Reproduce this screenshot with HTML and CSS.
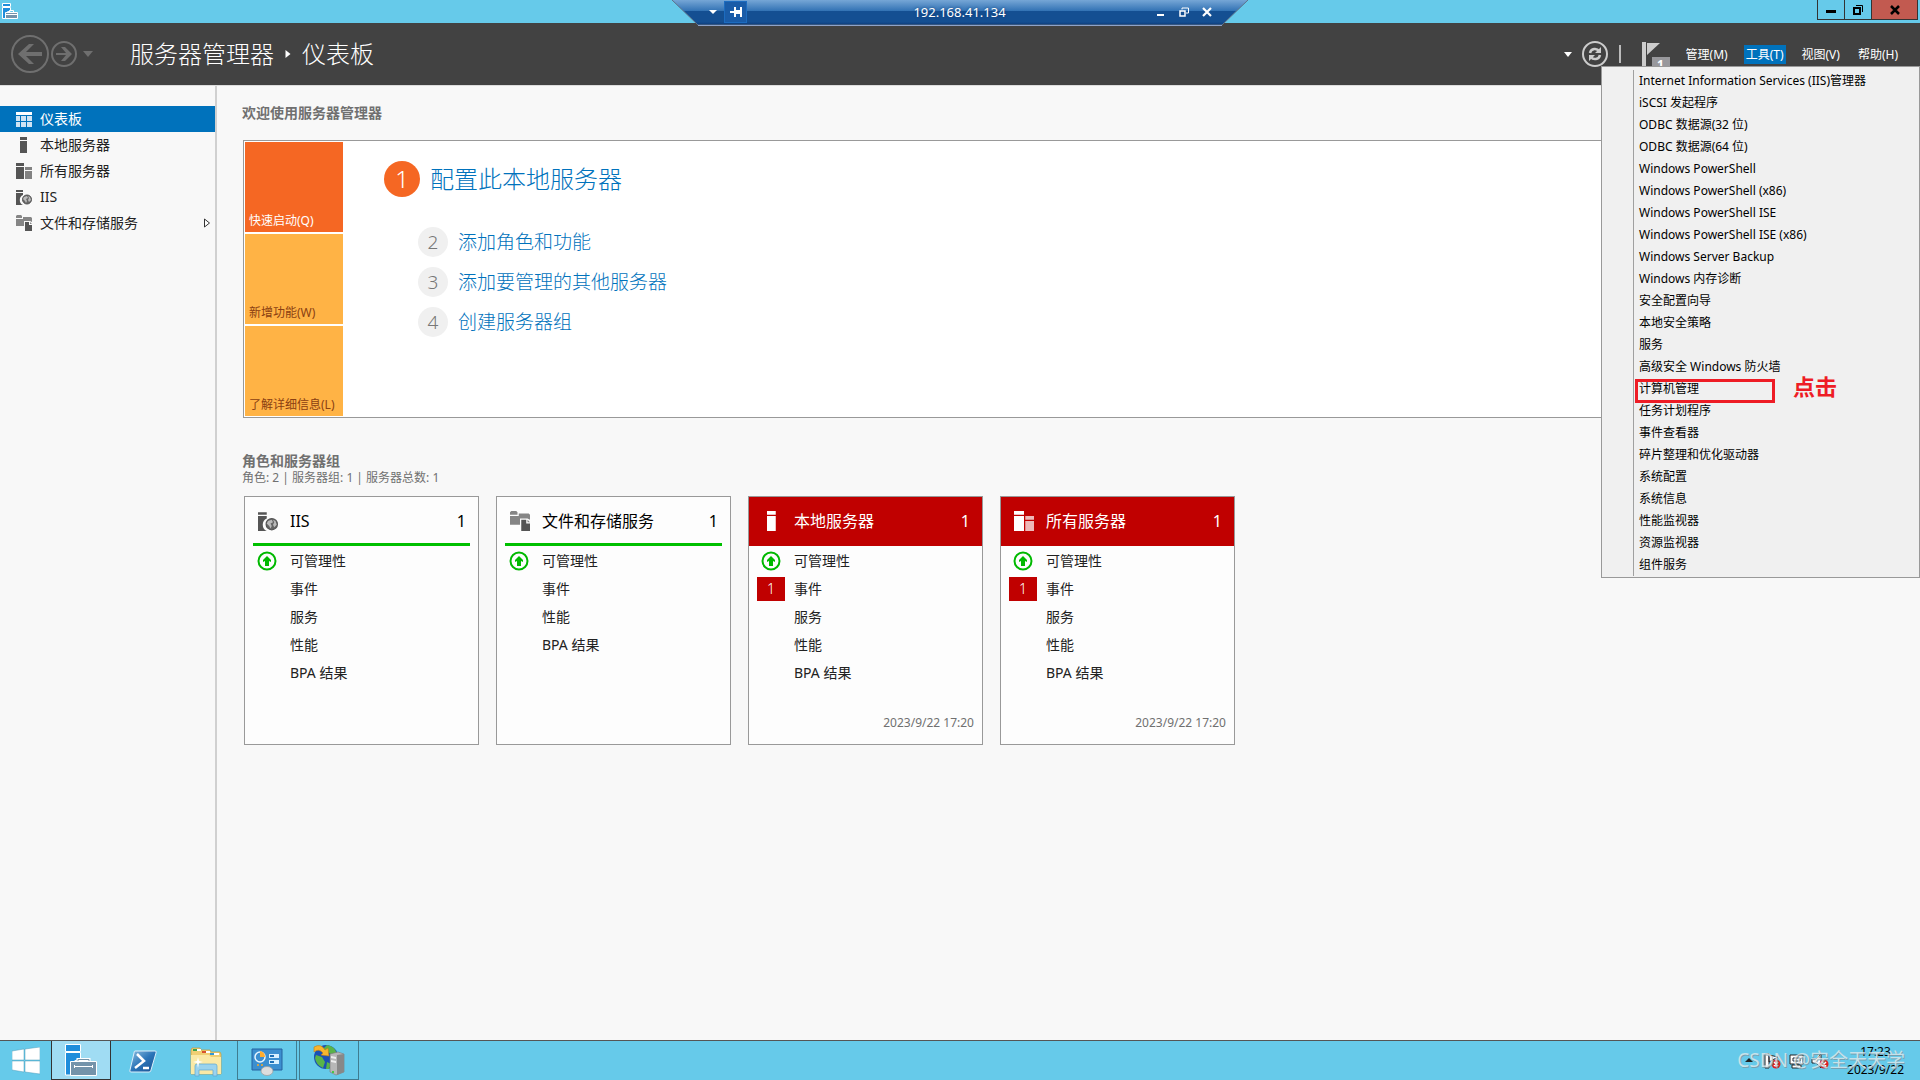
FILE: index.html
```html
<!DOCTYPE html>
<html lang="zh-CN">
<head>
<meta charset="utf-8">
<title>服务器管理器</title>
<link rel="stylesheet" href="styles.css">
</head>
<body>
<svg class="defs" aria-hidden="true">
  <symbol id="i-server" viewBox="0 0 16 16"><path d="M4 0h7v3H4zM4 4h7v12H4z"/></symbol>
  <symbol id="i-servers" viewBox="0 0 16 16"><path d="M0 0h8v3H0zM0 4h8v12H0z"/><path opacity=".72" d="M9 4h7v3H9zM9 8h7v8H9z"/></symbol>
  <symbol id="i-iis" viewBox="0 0 16 16"><path d="M0 1h7v2H0zM0 4h7v2a5.500 5.500 0 0 0 0 10H0z"/><circle cx="11" cy="10.500" r="4.500" fill="#666" stroke="#555" stroke-width="1"/><path fill="#bbb" d="M8 8l3-1 1 2-2 1 1 2-1 2-1-2-2-2zM12 7l2 1 1 3-2 2-1-2 1-2z"/></symbol>
  <symbol id="i-files" viewBox="0 0 16 16"><path fill="#858585" d="M0 1l1-1h4l1 1v2H0zM7 2h8l1 1v4l-2-1H8v5H0V4h7z"/><path d="M9 7h4v3h3v6H9z"/><path fill="#858585" d="M14 7l2 2h-2z"/></symbol>
  <symbol id="i-up" viewBox="0 0 20 20"><circle cx="10" cy="10" r="8.500" fill="none" stroke="#00b900" stroke-width="2"/><path fill="#00b900" d="M10 5l4 4v2l-2-1v5H8v-5l-2 1V9z"/></symbol>
</svg>

<header class="titlebar">
  <svg class="app-icon" viewBox="0 0 16 16"><path fill="#1f8ddb" stroke="#fff" d="M.5.500h8v3h-8zM.5 4.500h8V8L5 9v6.500H.5z"/><path fill="none" stroke="#fff" d="M7.500 9V7.500h4V9"/><path fill="#7493aa" stroke="#fff" d="M3.500 9.500h12v6h-12z"/><path stroke="#fff" d="M4 11.500h11"/></svg>
  <div class="window-buttons">
    <button aria-label="最小化"><svg viewBox="0 0 10 10"><path d="M0 5h10v3H0z"/></svg></button>
    <button aria-label="还原"><svg viewBox="0 0 10 10"><path fill="none" stroke="#000" stroke-width="2" d="M1 3h6v6H1z"/><path fill="none" stroke="#000" d="M3 .5h6.500V7"/></svg></button>
    <button class="close" aria-label="关闭"><svg viewBox="0 0 10 10"><path fill="none" stroke="#000" stroke-width="2.500" d="M1 1l8 8M9 1L1 9"/></svg></button>
  </div>
</header>

<div class="remote-bar">
  <svg class="remote-shape" viewBox="0 0 578 26" preserveAspectRatio="none">
    <defs><linearGradient id="rg" x2="0" y2="1"><stop offset="0" stop-color="#7cabd9"/><stop offset=".46" stop-color="#3272b4"/><stop offset=".47" stop-color="#144f92"/><stop offset=".88" stop-color="#144f92"/><stop offset="1" stop-color="#0c3a78"/></linearGradient></defs>
    <path fill="url(#rg)" stroke="#5f7087" d="M0-1L27 25h524L578-1z"/><path stroke="#8ea3c9" d="M27 25.500h524"/>
  </svg>
  <div class="remote-content">
    <button aria-label="连接菜单"><svg viewBox="0 0 10 10"><path fill="#fff" d="M1 3h8L5 7z"/></svg></button>
    <button class="pin" aria-label="固定"><svg viewBox="0 0 12 12"><path fill="#fff" d="M0 5h4V1h2v3h4V1h2v10h-2V8H6v3H4V7H0z"/></svg></button>
    <span class="remote-address">192.168.41.134</span>
    <button aria-label="最小化连接"><svg viewBox="0 0 10 10"><path fill="#fff" d="M1 7h7v2H1z"/></svg></button>
    <button aria-label="还原连接"><svg viewBox="0 0 10 10"><path fill="none" stroke="#fff" d="M3 2.500V1h6.500v5H7"/><path fill="none" stroke="#fff" stroke-width="1.500" d="M1 4h5v5H1z"/></svg></button>
    <button aria-label="关闭连接"><svg viewBox="0 0 10 10"><path fill="none" stroke="#fff" stroke-width="2.200" d="M1 1l8 8M9 1L1 9"/></svg></button>
  </div>
</div>

<div class="toolbar">
  <div class="history">
    <button aria-label="后退"><svg class="back" viewBox="0 0 38 38"><circle cx="19" cy="19" r="18" fill="none" stroke="#6f6f6f" stroke-width="2"/><path fill="#6f6f6f" d="M7 19L18 9h5l-8 8h16v4H15l8 8h-5z"/></svg></button>
    <button aria-label="前进"><svg class="forward" viewBox="0 0 26 26"><circle cx="13" cy="13" r="12" fill="none" stroke="#6f6f6f" stroke-width="2"/><path fill="#6f6f6f" d="M21 13l-7-7h-4l5 6H5v2h10l-5 6h4z"/></svg></button>
    <button aria-label="历史记录"><svg class="caret" viewBox="0 0 10 6"><path fill="#6f6f6f" d="M0 0h10L5 6z"/></svg></button>
  </div>
  <h1 class="crumbs"><span>服务器管理器</span><svg viewBox="0 0 5 8"><path fill="#fff" d="M0 0l5 4-5 4z"/></svg><span>仪表板</span></h1>
  <div class="tools">
    <button aria-label="更多"><svg class="caret-small" viewBox="0 0 8 5"><path fill="#fff" d="M0 0h8L4 5z"/></svg></button>
    <button aria-label="刷新"><svg class="refresh" viewBox="0 0 26 26"><circle cx="13" cy="13" r="12" fill="none" stroke="#ccc" stroke-width="2"/><path fill="none" stroke="#ccc" stroke-width="2.500" d="M8 12c1-5 7-5 9-2M18 14c-1 5-7 5-9 2"/><path fill="#ccc" d="M19 6v6h-6zM7 20v-6h6z"/></svg></button>
    <span class="separator"></span>
    <button class="flag" aria-label="通知"><svg viewBox="0 0 18 24"><path fill="#ccc" d="M0 0h4v24H0zM5 1h13L5 13z"/></svg><span class="flag-count">1</span></button>
    <nav class="menubar">
      <button>管理(M)</button><button class="open">工具(T)</button><button>视图(V)</button><button>帮助(H)</button>
    </nav>
  </div>
  <ul class="menu">
    <li><a href="#">Internet Information Services (IIS)管理器</a></li>
    <li><a href="#">iSCSI 发起程序</a></li>
    <li><a href="#">ODBC 数据源(32 位)</a></li>
    <li><a href="#">ODBC 数据源(64 位)</a></li>
    <li><a href="#">Windows PowerShell</a></li>
    <li><a href="#">Windows PowerShell (x86)</a></li>
    <li><a href="#">Windows PowerShell ISE</a></li>
    <li><a href="#">Windows PowerShell ISE (x86)</a></li>
    <li><a href="#">Windows Server Backup</a></li>
    <li><a href="#">Windows 内存诊断</a></li>
    <li><a href="#">安全配置向导</a></li>
    <li><a href="#">本地安全策略</a></li>
    <li><a href="#">服务</a></li>
    <li><a href="#">高级安全 Windows 防火墙</a></li>
    <li class="marked"><a href="#">计算机管理</a><span class="mark-box"></span><strong class="mark-text">点击</strong></li>
    <li><a href="#">任务计划程序</a></li>
    <li><a href="#">事件查看器</a></li>
    <li><a href="#">碎片整理和优化驱动器</a></li>
    <li><a href="#">系统配置</a></li>
    <li><a href="#">系统信息</a></li>
    <li><a href="#">性能监视器</a></li>
    <li><a href="#">资源监视器</a></li>
    <li><a href="#">组件服务</a></li>
  </ul>
</div>

<div class="workspace">
  <nav class="sidebar">
    <a class="selected" href="#"><svg viewBox="0 0 16 16"><path fill="#fff" d="M0 1h16v3H0z"/><path fill="#cfe4f4" d="M0 5h4v5H0zM5 5h5v5H5zM11 5h5v5h-5zM0 11h4v5H0zM5 11h5v5H5zM11 11h5v5h-5z"/></svg>仪表板</a>
    <a href="#"><svg><use href="#i-server"/></svg>本地服务器</a>
    <a href="#"><svg><use href="#i-servers"/></svg>所有服务器</a>
    <a href="#"><svg><use href="#i-iis"/></svg>IIS</a>
    <a href="#"><svg><use href="#i-files"/></svg>文件和存储服务<svg class="expand" viewBox="0 0 6 10"><path fill="#fff" stroke="#333" d="M.5 1l5 4-5 4z"/></svg></a>
  </nav>

  <main class="content">
    <h2>欢迎使用服务器管理器</h2>
    <section class="welcome">
      <div class="tiles">
        <button class="tile active">快速启动(Q)</button>
        <button class="tile">新增功能(W)</button>
        <button class="tile">了解详细信息(L)</button>
      </div>
      <ol class="steps">
        <li class="primary"><span class="number">1</span><a href="#">配置此本地服务器</a></li>
        <li><span class="number">2</span><a href="#">添加角色和功能</a></li>
        <li><span class="number">3</span><a href="#">添加要管理的其他服务器</a></li>
        <li><span class="number">4</span><a href="#">创建服务器组</a></li>
      </ol>
    </section>

    <h2 class="groups-title">角色和服务器组</h2>
    <p class="summary">角色: 2 | 服务器组: 1 | 服务器总数: 1</p>
    <div class="cards">
      <article class="card">
        <h3><svg><use href="#i-iis"/></svg>IIS<span class="count">1</span></h3>
        <ul>
          <li><span class="status"><svg><use href="#i-up"/></svg></span>可管理性</li>
          <li><span class="status"></span>事件</li><li><span class="status"></span>服务</li><li><span class="status"></span>性能</li><li><span class="status"></span>BPA 结果</li>
        </ul>
      </article>
      <article class="card">
        <h3><svg><use href="#i-files"/></svg>文件和存储服务<span class="count">1</span></h3>
        <ul>
          <li><span class="status"><svg><use href="#i-up"/></svg></span>可管理性</li>
          <li><span class="status"></span>事件</li><li><span class="status"></span>性能</li><li><span class="status"></span>BPA 结果</li>
        </ul>
      </article>
      <article class="card alert">
        <h3><svg><use href="#i-server"/></svg>本地服务器<span class="count">1</span></h3>
        <ul>
          <li><span class="status"><svg><use href="#i-up"/></svg></span>可管理性</li>
          <li><span class="status badge">1</span>事件</li><li><span class="status"></span>服务</li><li><span class="status"></span>性能</li><li><span class="status"></span>BPA 结果</li>
        </ul>
        <time>2023/9/22 17:20</time>
      </article>
      <article class="card alert">
        <h3><svg><use href="#i-servers"/></svg>所有服务器<span class="count">1</span></h3>
        <ul>
          <li><span class="status"><svg><use href="#i-up"/></svg></span>可管理性</li>
          <li><span class="status badge">1</span>事件</li><li><span class="status"></span>服务</li><li><span class="status"></span>性能</li><li><span class="status"></span>BPA 结果</li>
        </ul>
        <time>2023/9/22 17:20</time>
      </article>
    </div>
  </main>
</div>

<footer class="taskbar">
  <button class="start" aria-label="开始"><svg viewBox="0 0 28 28"><path fill="#fff" stroke="#4f9dbb" stroke-width=".5" d="M0 4l12-2v11H0zM13 2l15-2v13H13zM0 14h12v11L0 23zM13 14h15v13l-15-2z"/></svg></button>
  <button class="task current" aria-label="服务器管理器"><svg viewBox="0 0 32 32"><path fill="#1f8ddb" stroke="#fff" d="M.5.500h15v7H.5zM.5 8.500h15V15q-10 2-10 8v8h-5z"/><path fill="none" stroke="#fff" stroke-width="3" d="M13 17v-1.500h11V17"/><path fill="none" stroke="#7493aa" d="M13 17v-1.500h11V17"/><path fill="#7493aa" stroke="#fff" d="M5.500 17.500h26v14h-26z"/><path stroke="#fff" d="M9 22.500h19M9.500 21v3M27.500 21v3"/></svg></button>
  <button class="task pinned" aria-label="PowerShell"><svg viewBox="0 0 32 32"><defs><linearGradient id="ps" x2="1" y2="1"><stop offset="0" stop-color="#8fc0e0"/><stop offset=".5" stop-color="#2a74b8"/><stop offset="1" stop-color="#1a4f8e"/></linearGradient></defs><path fill="url(#ps)" stroke="#dbeefa" d="M8 6h20q2 0 1 2l-5 17q0 2-2 2H4q-2 0-1-2L7 8q0-2 1-2z"/><path fill="none" stroke="#fff" stroke-width="2.500" d="M10 9l7 7-9 7M16 23h6"/></svg></button>
  <button class="task pinned" aria-label="文件资源管理器"><svg viewBox="0 0 32 32"><path fill="#f0cf74" stroke="#c49b3a" stroke-width=".7" d="M1 5l1-2h8l1 2h9l1 2h9l1 2v20H1z"/><path fill="#3aa34a" d="M3 4h4v2H3z"/><path fill="#fff" d="M7 4h4v2H7zM14 6h6v2h-6zM22 8h7v2h-7z"/><path fill="#d8522e" d="M12 6h4v2h-4z"/><path fill="#3198d6" d="M20 8h4v2h-4z"/><path fill="#fae9a6" d="M1 10h18l2 2h10v17H1z"/><path fill="#9bd3ee" stroke="#5ba8d0" stroke-width=".7" d="M5 21q0-2 2-2h18q2 0 2 2v10h-4v-6H9v6H5z"/><path fill="#fff" d="M8 12l1 4 4 1-4 1-1 5-1-5-4-1 4-1z"/></svg></button>
  <button class="task running" aria-label="控制面板"><svg viewBox="0 0 32 32"><path fill="#3c8fd0" stroke="#2463a0" d="M1 5h30v21H1z"/><circle cx="9" cy="13" r="5" fill="none" stroke="#e7f5ff" stroke-width="1.500"/><path fill="#ffad2e" d="M9 13V7q5 1 5 6z"/><path fill="#d8f0ff" d="M18 10h10v4H18zM18 16h10v4H18z"/><path fill="#1d6fb6" d="M19 11h4v2h-4zM19 17h4v2h-4z"/><circle cx="7" cy="21" r="1" fill="#fa2"/><circle cx="11" cy="21" r="1" fill="#fa2"/><ellipse cx="16" cy="27" rx="6" ry="4.500" fill="#ddd" stroke="#999" stroke-width=".7"/></svg></button>
  <button class="task running" aria-label="IIS 管理器"><svg viewBox="0 0 32 32"><circle cx="13" cy="13" r="12" fill="#1b50b4"/><path fill="#58b34a" d="M14 1q8 1 10 9l-5 1-4-3-3 1-2-4zM3 11l6 2 3 5-2 6q-7-3-8-10zM14 18l4 2-2 5h-3z"/><path fill="#f7b52e" stroke="#bd7c13" stroke-width=".6" d="M1 3q7-4 11 3l3-2 1 8-8-1 2-2Q6 4 1 8z"/><path fill="#b7b7b7" stroke="#777" stroke-width=".6" d="M17 10l8-2 6 2v18l-8 3-6-3z"/><path fill="#888" d="M24 11l7-1v18l-7 3z"/><path fill="#eee" d="M18 12l5 1v2l-5-1zM18 16l5 1v2l-5-1z"/><circle cx="20" cy="28" r="1" fill="#2c2"/></svg></button>
  <div class="tray">
    <svg class="tray-icons" viewBox="0 0 86 20">
      <path fill="#222" d="M0 11l4-4 4 4z"/>
      <path fill="#fff" stroke="#222" d="M20 3h4v14h-4zM24 4l9 2-9 5z"/>
      <path fill="#fff" stroke="#222" d="M45 4h13v9H45zM47 14h9v3h-9z"/><path fill="none" stroke="#222" d="M48 7h7v3h-7z"/>
      <path fill="#fff" stroke="#222" d="M67 8h4l5-5v14l-5-5h-4z"/>
      <circle cx="31" cy="13" r="4.500" fill="#d22"/><circle cx="79" cy="13" r="4.500" fill="#d22"/>
      <path stroke="#fff" stroke-width="1.500" d="M29 11l4 4M33 11l-4 4M77 11l4 4M81 11l-4 4"/>
    </svg>
    <div class="clock"><time>17:23</time><time>2023/9/22</time></div>
    <span class="watermark">CSDN @安全天天学</span>
  </div>
</footer>
</body>
</html>
```
FILE: styles.css
```css
* { box-sizing: border-box; }
body {
  margin: 0;
  min-height: 100vh;
  display: flex;
  flex-direction: column;
  position: relative;
  background: #f8f8f8;
  color: #222;
  font: 14px/20px "Noto Sans", "Noto Sans CJK SC", sans-serif;
}
button { margin: 0; padding: 0; border: 0; background: none; color: inherit; font: inherit; }
button svg { display: block; }
a { color: inherit; text-decoration: none; }
h1, h2, h3, p, ul, ol { margin: 0; padding: 0; font-weight: normal; }
ul, ol { list-style: none; }
.defs { position: absolute; width: 0; height: 0; }

.titlebar { display: flex; justify-content: space-between; height: 23px; background: #66caea; padding: 0 2px; }
.app-icon { width: 16px; height: 16px; margin-top: 3px; }
.window-buttons { display: flex; height: 20px; border: 1px solid #333; border-top: 0; }
.window-buttons button { width: 27px; display: grid; place-items: center; border-right: 1px solid #333; }
.window-buttons .close { width: 45px; background: #c25a50; border-right: 0; }
.window-buttons svg { width: 10px; height: 10px; }

.remote-bar { position: absolute; top: 0; left: 50%; width: 578px; height: 26px; margin-left: -289px; z-index: 2; }
.remote-shape { position: absolute; width: 100%; height: 100%; }
.remote-content { position: relative; display: flex; height: 24px; padding: 0 31px 0 30px; align-items: center; }
.remote-content button { width: 23px; height: 22px; display: grid; place-items: center; }
.remote-content svg { width: 10px; height: 10px; }
.remote-content .pin { background: #1a5ca8; border: 1px solid #1c6cc0; }
.remote-content .pin svg { width: 12px; height: 12px; }
.remote-address { flex: 1; text-align: center; padding-left: 23px; color: #fff; font-size: 13px; text-shadow: 0 0 3px #0b3a74; }

.toolbar { position: relative; z-index: 1; display: flex; align-items: center; height: 62px; padding: 0 20px 0 11px; background: #424242; color: #fff; }
.history { display: flex; align-items: center; gap: 2px; width: 119px; }
.back { width: 38px; height: 38px; }
.forward { width: 26px; height: 26px; }
.caret { width: 10px; height: 6px; margin-left: 4px; }
.crumbs { display: flex; align-items: center; gap: 11px; font-size: 24px; line-height: 32px; font-weight: 300; }
.crumbs svg { width: 6px; height: 8px; }
.tools { display: flex; align-items: center; margin-left: auto; font-size: 12px; line-height: 18px; }
.caret-small { width: 8px; height: 5px; }
.refresh { width: 26px; height: 26px; margin-left: 10px; }
.separator { width: 2px; height: 18px; margin: 0 21px 0 11px; background: #bbb; }
.flag { position: relative; width: 28px; height: 24px; margin-right: 14px; }
.flag svg { width: 18px; height: 24px; }
.flag-count { position: absolute; left: 10px; top: 15px; width: 18px; height: 16px; background: #98989c; font-weight: bold; text-align: center; line-height: 16px; }
.menubar { display: flex; gap: 14px; }
.menubar button { padding: 1px 2px 0; }
.menubar .open { background: #0072bc; }

.menu { position: absolute; top: 43px; right: 0; width: 319px; padding: 3px 0 1px 31px; background: #f0f0f0; border: 1px solid #999; color: #000; font-size: 12px; line-height: 22px; }
.menu li { position: relative; height: 22px; padding-left: 5px; border-left: 1px solid #a0a0a0; }
.menu a { display: block; }
.mark-box { position: absolute; left: 1px; top: 1px; width: 140px; height: 24px; border: 3px solid #ee1c25; z-index: 1; }
.mark-text { position: absolute; left: 159px; top: -4px; color: #ee1c25; font-size: 22px; line-height: 24px; }

.workspace { flex: 1; display: flex; border-top: 1px solid #ddd; }
.sidebar { width: 217px; padding-top: 20px; border-right: 2px solid #d0d0d0; }
.sidebar a { display: flex; align-items: center; gap: 8px; height: 26px; padding: 0 5px 0 16px; }
.sidebar svg { width: 16px; height: 16px; fill: #555; }
.sidebar .selected { background: #0072bc; color: #fff; }
.sidebar .expand { width: 6px; height: 10px; margin-left: auto; }

.content { flex: 1; min-width: 0; padding: 17px 0 40px 26px; }
.content h2 { color: #707070; font-size: 14px; font-weight: bold; margin-left: -1px; }
.welcome { display: flex; margin-top: 17px; height: 278px; padding: 1px; border: 1px solid #999; background: #fff; }
.tiles { display: flex; flex-direction: column; gap: 2px; width: 98px; }
.tile { flex: 1; display: flex; align-items: flex-end; padding: 1px 4px; background: #ffb345; color: #8a4012; font-size: 12px; }
.tile.active { background: #f56723; color: #fff; }
.steps { padding: 19px 0 0 41px; }
.steps li { display: flex; align-items: center; gap: 10px; height: 30px; margin: 0 0 10px 34px; color: #0072bc; font-size: 19px; font-weight: 300; }
.number { display: grid; place-items: center; width: 30px; height: 30px; border-radius: 50%; background: #f0f0f0; color: #777; }
.steps .primary { height: 36px; margin: 0 0 30px; font-size: 24px; }
.primary .number { width: 36px; height: 36px; background: #f56723; color: #fff; }
.content .groups-title { margin-top: 34px; line-height: 18px; }
.summary { margin-left: -1px; color: #707070; font-size: 12px; line-height: 16px; }
.cards { display: flex; flex-wrap: wrap; gap: 17px; padding: 10px 0 0 1px; }
.card { display: flex; flex-direction: column; width: 235px; min-height: 249px; border: 1px solid #999; background: #fdfdfd; }
.card h3 { display: flex; align-items: center; height: 49px; margin: 0 8px; padding: 2px 4px 0; border-bottom: 3px solid #00c000; color: #000; font-size: 16px; }
.card h3 svg { width: 20px; height: 20px; margin: 0 12px 0 1px; fill: #555; }
.count { margin-left: auto; }
.card.alert h3 { margin: 0; padding: 2px 12px 0; border-color: #c00000; background: #c00000; color: #fff; }
.card.alert h3 svg { fill: #fff; }
.card ul { padding: 1px 8px; }
.card li { display: flex; align-items: center; gap: 9px; height: 28px; }
.status { display: grid; place-items: center; width: 28px; height: 24px; }
.status svg { width: 20px; height: 20px; }
.badge { background: #c00000; color: #fff; font-weight: 300; }
.card time { margin: auto 8px 11px auto; color: #707070; font-size: 12px; }

.taskbar { display: flex; height: 40px; border-top: 1px solid #555; background: #66caea; }
.start { width: 51px; display: grid; place-items: center; }
.start svg { width: 28px; height: 28px; }
.task { width: 60px; display: grid; place-items: center; }
.task svg { width: 32px; height: 32px; }
.pinned { width: 63px; }
.current { background: #a0dcf3; border: 1px solid #333; border-top: 0; }
.running { border: 1px solid #3f7c90; border-top: 0; margin-right: 2px; }
.tray { position: relative; display: flex; align-items: center; margin-left: auto; padding-right: 16px; }
.tray-icons { width: 86px; height: 20px; margin-right: 16px; }
.clock { display: flex; flex-direction: column; align-items: center; color: #000; font-size: 12px; line-height: 18px; }
.watermark { position: absolute; right: 15px; top: 7px; color: #dfe8ec; opacity: .8; font-size: 19px; line-height: 24px; white-space: nowrap; text-shadow: 1px 1px 0 #7d98a3; }
```
